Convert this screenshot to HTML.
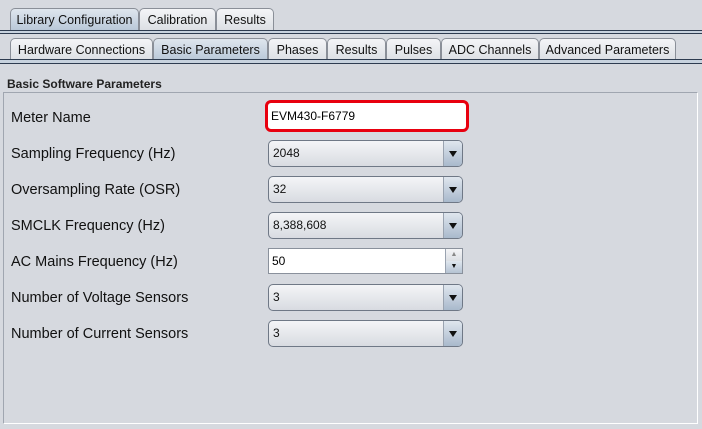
<!DOCTYPE html>
<html><head><style>
body{margin:0;width:702px;height:429px;background:#d6d9df;font-family:"Liberation Sans",sans-serif;position:relative;overflow:hidden}
.a{position:absolute}
.tab{position:absolute;height:22px;border:1px solid #8a8f98;border-bottom:none;border-radius:5px 5px 0 0;background:linear-gradient(#f4f5f7,#dcdfe4);font-size:12.5px;line-height:22px;text-align:center;color:#111;box-sizing:border-box}
.sel{background:linear-gradient(#dfe6ee,#b9c8d8)}
.line{position:absolute;left:0;width:702px;height:1px;background:#2e3c50}
.lbl{position:absolute;left:11px;font-size:14.5px;color:#111}
.cb{position:absolute;left:268px;width:195px;height:27px;box-sizing:border-box;border:1px solid #6f7886;border-radius:5px;background:linear-gradient(#f4f5f7,#d8dbe1);font-size:12px;line-height:25px;padding-left:4px;color:#111}
.cb i{position:absolute;right:0;top:0;width:18px;height:25px;border-left:1px solid #9aa3b0;background:linear-gradient(#dfe6ee,#a9b9cc);border-radius:0 4px 4px 0}
.cb i:after{content:"";position:absolute;left:5px;top:10px;border:4px solid transparent;border-top:6px solid #111;border-bottom:none}
</style></head><body>
<div class="tab sel" style="left:10px;top:8px;width:129px">Library Configuration</div>
<div class="tab" style="left:139px;top:8px;width:77px">Calibration</div>
<div class="tab" style="left:216px;top:8px;width:58px">Results</div>
<div class="line" style="top:30px"></div><div class="line" style="top:33px"></div>
<div class="a" style="left:0;top:31px;width:702px;height:2px;background:#c7d2de"></div>
<div class="tab" style="left:10px;top:38px;width:143px">Hardware Connections</div>
<div class="tab sel" style="left:153px;top:38px;width:115px">Basic Parameters</div>
<div class="tab" style="left:268px;top:38px;width:59px">Phases</div>
<div class="tab" style="left:327px;top:38px;width:59px">Results</div>
<div class="tab" style="left:386px;top:38px;width:55px">Pulses</div>
<div class="tab" style="left:441px;top:38px;width:98px">ADC Channels</div>
<div class="tab" style="left:539px;top:38px;width:137px">Advanced Parameters</div>
<div class="line" style="top:59px"></div><div class="line" style="top:63px"></div>
<div class="a" style="left:0;top:60px;width:702px;height:3px;background:#c7d2de"></div>
<div class="a" style="left:7px;top:77px;font-size:12px;font-weight:bold;color:#222">Basic Software Parameters</div>
<div class="a" style="left:3px;top:92px;width:693px;height:330px;border:1px solid #a0a6b0;border-right-color:#fff;border-bottom-color:#fff"></div>
<div class="lbl" style="top:110px">Meter Name</div>
<div class="a" style="left:265px;top:100px;width:195px;height:26px;border:3px solid #e8000f;border-radius:6px;background:#fff;font-size:12px;line-height:26px;padding-left:3px">EVM430-F6779</div>
<div class="lbl" style="top:146px">Sampling Frequency (Hz)</div>
<div class="cb" style="top:140px">2048<i></i></div>
<div class="lbl" style="top:182px">Oversampling Rate (OSR)</div>
<div class="cb" style="top:176px">32<i></i></div>
<div class="lbl" style="top:218px">SMCLK Frequency (Hz)</div>
<div class="cb" style="top:212px">8,388,608<i></i></div>
<div class="lbl" style="top:254px">AC Mains Frequency (Hz)</div>
<div class="a" style="left:268px;top:248px;width:195px;height:26px;box-sizing:border-box;border:1px solid #8a919c;background:#fff;font-size:12px;line-height:24px;padding-left:3px">50
<div class="a" style="right:0;top:0;width:16px;height:12px;background:linear-gradient(#f4f5f7,#dcdfe4);border-left:1px solid #9aa3b0;font-size:7px;line-height:12px;text-align:center;color:#888">▲</div>
<div class="a" style="right:0;top:12px;width:16px;height:12px;background:linear-gradient(#dfe6ee,#b5c3d3);border-left:1px solid #9aa3b0;font-size:7px;line-height:12px;text-align:center;color:#111">▼</div></div>
<div class="lbl" style="top:290px">Number of Voltage Sensors</div>
<div class="cb" style="top:284px">3<i></i></div>
<div class="lbl" style="top:326px">Number of Current Sensors</div>
<div class="cb" style="top:320px">3<i></i></div>
</body></html>
